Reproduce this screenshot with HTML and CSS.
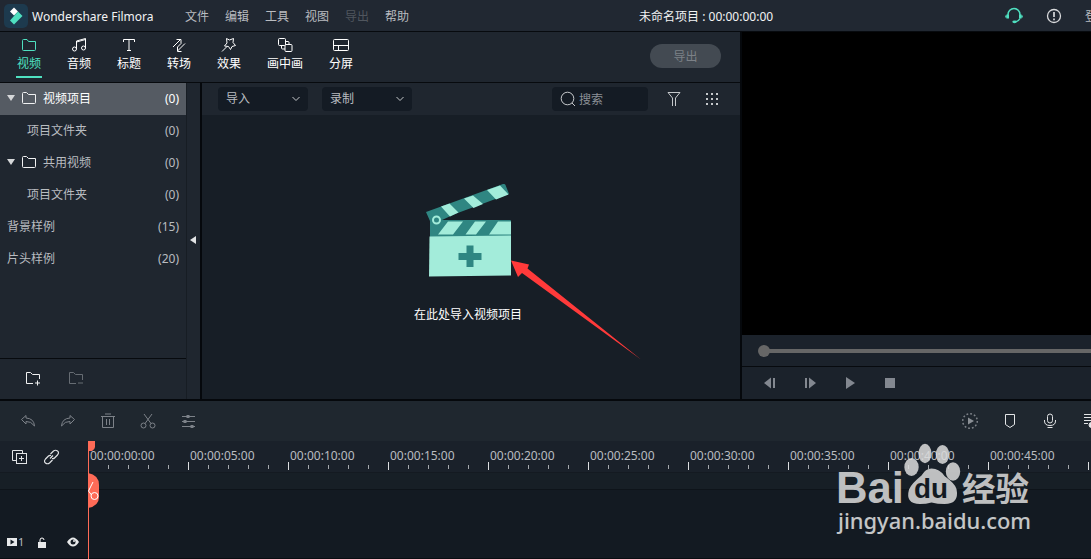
FILE: index.html
```html
<!DOCTYPE html>
<html lang="zh-CN">
  <head>
    <meta charset="UTF-8" />
    <meta name="viewport" content="width=device-width, initial-scale=1.0" />
    <title>Wondershare Filmora</title>
    <link rel="stylesheet" href="styles.css">
  </head>
  <body>
    <header class="titlebar">
      <div class="logo">
        <svg width="24" height="24" viewBox="0 0 24 24">
          <rect width="24" height="24" rx="5" fill="#1d3a4e" />
          <path d="M10 3.500l4 4-4 4-4-4z" fill="#fff" />
          <path d="M14 7.500l4.500 4.500-8.500 8.500-4-4z" fill="#4fe0c0" />
        </svg>
      </div>
      <span class="app-name">Wondershare Filmora</span>
      <nav class="menu">
        <span>文件</span>
        <span>编辑</span>
        <span>工具</span>
        <span>视图</span>
        <span class="disabled">导出</span>
        <span>帮助</span>
      </nav>
      <span class="project-name">未命名项目 : 00:00:00:00</span>
      <div class="account">
        <svg width="18" height="18" viewBox="0 0 18 18" fill="none" stroke="#4fe0c0" stroke-width="1.500">
          <path d="M3 9V7.500a6 6 0 0 1 12 0V9" />
          <path d="M2.700 7.500v4M15.300 7.500v4" stroke-width="2.600" />
          <path d="M1 8.500v2M17 8.500v2M15 11.500q-1.500 3-5 3.300" />
          <ellipse cx="9.500" cy="14.800" rx="2.200" ry="1.400" fill="#4fe0c0" stroke="none" />
        </svg>
        <svg width="16" height="16" viewBox="0 0 16 16" fill="none" stroke="#d9dadc" stroke-width="1.300">
          <circle cx="8" cy="8" r="6.500" />
          <path d="M8 4v5M8 10.500v1.800" stroke-width="1.700" />
        </svg>
        <span>登录</span>
      </div>
    </header>

    <main class="workspace">
      <section class="library">
        <div class="tabs">
          <div class="tab active">
            <svg width="18" height="16" viewBox="0 0 18 16"><path d="M2.500 3.500q0-1 1-1h3.500l1.500 2h7v8q0 1-1 1h-11q-1 0-1-1z" /></svg>
            <span>视频</span>
          </div>
          <div class="tab">
            <svg width="18" height="16" viewBox="0 0 18 16"><path d="M6.500 12V4l9-2.500V11M6.500 5l9-2.500" /><circle cx="4.500" cy="12" r="2" /><circle cx="13.500" cy="11" r="2" /></svg>
            <span>音频</span>
          </div>
          <div class="tab">
            <svg width="18" height="16" viewBox="0 0 18 16"><path d="M3.500 5V2.500h11V5M9 2.500v11M7 13.500h4" /></svg>
            <span>标题</span>
          </div>
          <div class="tab">
            <svg width="18" height="16" viewBox="0 0 18 16"><path d="M3 10l7.500-7.500M6.500 2.500h4.500v4L7.500 10v4.500h4M7.500 14l7.500-7.500" /></svg>
            <span>转场</span>
          </div>
          <div class="tab">
            <svg width="18" height="16" viewBox="0 0 18 16"><path d="M6.500 1.500l3 1.500 4-1.500-.500 4L15.500 8.500l-3.500 1-1.500 3-2-3-4-.500 2.500-3zM7 9.500l-5 5" /></svg>
            <span>效果</span>
          </div>
          <div class="tab">
            <svg width="18" height="16" viewBox="0 0 18 16"><rect x="2.500" y="1.500" width="7" height="7" rx="1" /><path d="M9.500 4.500H12q1 0 1 1V7M5.500 8.500V11q0 1 1 1H9" /><rect x="9" y="7.500" width="7" height="7" rx="1" /></svg>
            <span>画中画</span>
          </div>
          <div class="tab">
            <svg width="18" height="16" viewBox="0 0 18 16"><rect x="1.500" y="2.500" width="15" height="11" rx="1" /><path d="M1.500 8.500h15M6.500 8.500v5" /></svg>
            <span>分屏</span>
          </div>
          <button class="export">导出</button>
        </div>

        <div class="library-body">
          <aside class="sidebar">
            <ul class="tree">
              <li class="parent selected"><i class="caret"></i><svg width="16" height="14" viewBox="0 0 16 14"><path d="M1.500 2.500q0-1 1-1h3l2 2h7v8q0 1-1 1h-11q-1 0-1-1z" /></svg><span>视频项目</span><b>(0)</b></li>
              <li class="child"><span>项目文件夹</span><b>(0)</b></li>
              <li class="parent"><i class="caret"></i><svg width="16" height="14" viewBox="0 0 16 14"><path d="M1.500 2.500q0-1 1-1h3l2 2h7v8q0 1-1 1h-11q-1 0-1-1z" /></svg><span>共用视频</span><b>(0)</b></li>
              <li class="child"><span>项目文件夹</span><b>(0)</b></li>
              <li><span>背景样例</span><b>(15)</b></li>
              <li><span>片头样例</span><b>(20)</b></li>
            </ul>
            <div class="folder-actions">
              <svg width="18" height="16" viewBox="0 0 18 16"><path d="M9 13.500H2.500v-11h4l2 2h7V9M13.500 10.500v5M11 13h5" /></svg>
              <svg class="dim" width="18" height="16" viewBox="0 0 18 16"><path d="M9 13.500H2.500v-11h4l2 2h7V10M11 13h5" /></svg>
            </div>
          </aside>
          <div class="collapse"><i></i></div>

          <div class="media">
            <div class="media-bar">
              <div class="select"><span>导入</span><svg width="10" height="6" viewBox="0 0 10 6"><path d="M1.500 1l3.500 3.500L8.500 1" /></svg></div>
              <div class="select"><span>录制</span><svg width="10" height="6" viewBox="0 0 10 6"><path d="M1.500 1l3.500 3.500L8.500 1" /></svg></div>
              <div class="search">
                <svg width="16" height="16" viewBox="0 0 16 16"><circle cx="7.500" cy="7.500" r="6.300" /><path d="M12 12l3 3" /></svg>
                <span>搜索</span>
              </div>
              <svg class="filter" width="14" height="16" viewBox="0 0 14 16"><path d="M1 1.500h12L8.500 7v8M1 1.500L5.500 7v8" /></svg>
              <svg class="grid" width="14" height="14" viewBox="0 0 14 14"><path d="M1 2h12M1 7h12M1 12h12" stroke-dasharray="2 3" stroke-width="2" /></svg>
            </div>
            <div class="drop-area">
              <svg width="90" height="98" viewBox="0 0 90 98">
                <path d="M1 29L78 1q2-.500 2.500 1l3.500 9L30 31l-13 6H85q1 0 1 1v16H5V38z" fill="#2f8682" />
                <path d="M16 23.500l8.500-3 9 9-8.500 4zM39 15.500l9-3 10 8.500-9.500 4zM62 7l13-4.500 8.500 9-12.500 5zM23 38.500h15L28 51.500H13zM50 38.500h11l-10 13H40.500zM73 38.500h13v13H64z" fill="#a3ecda" />
                <path d="M4.500 53.500l81.500-1v40L4 93.500z" fill="#a3ecda" />
                <circle cx="11.500" cy="37" r="3.500" fill="#2f8682" stroke="#a3ecda" stroke-width="2" />
                <path d="M41.500 62.500h7v7.500h8v7h-8V84h-7v-7h-8v-7h8z" fill="#2f8682" />
              </svg>
              <p>在此处导入视频项目</p>
              <svg class="arrow" width="134" height="104" viewBox="0 0 134 104">
                <path d="M1 4.500l18 4-1.500 4L131 103.500 12 17l-4 4z" fill="#ff3a3a" />
              </svg>
            </div>
          </div>
        </div>
      </section>

      <section class="preview">
        <div class="screen"></div>
        <div class="seek"><i class="knob"></i><i class="track"></i></div>
        <div class="controls">
          <svg width="12" height="12" viewBox="0 0 12 12"><path d="M0 6l7-5.500v11zM9 1h2v10H9z" /></svg>
          <svg width="12" height="12" viewBox="0 0 12 12"><path d="M1 1h2v10H1zM5 .5L12 6l-7 5.500z" /></svg>
          <svg width="12" height="12" viewBox="0 0 12 12"><path d="M2 0l9 6-9 6z" /></svg>
          <svg width="12" height="12" viewBox="0 0 12 12"><path d="M1 1h10v10H1z" /></svg>
        </div>
      </section>
    </main>

    <section class="timeline">
      <div class="edit-bar">
        <div class="edit-tools">
          <svg width="16" height="16" viewBox="0 0 16 16"><path d="M6 2.500L1.500 6.500 6 11V8.500q5-.500 8.500 4.500Q14 5.500 6 5z" /></svg>
          <svg width="16" height="16" viewBox="0 0 16 16"><path d="M10 2.500l4.500 4L10 11V8.500Q5 8 1.500 13 2 5.500 10 5z" /></svg>
          <svg width="16" height="16" viewBox="0 0 16 16"><path d="M1 3.500h14M5 1h6M2.500 3.500v11h11v-11M6.500 6v6M9.500 6v6" /></svg>
          <svg width="16" height="16" viewBox="0 0 16 16"><circle cx="3.500" cy="12.500" r="2.500" /><circle cx="12.500" cy="12.500" r="2.500" /><path d="M4 1l7 9.500M12 1L5 10.500" /></svg>
          <svg width="16" height="16" viewBox="0 0 16 16"><path d="M2 3.500h13M2 8.500h13M2 13.500h13" /><path d="M6.500 3.500h3M3.500 8.500h3M10.500 13.500h3" stroke-width="3" /></svg>
        </div>
        <div class="record-tools">
          <svg class="dim" width="18" height="18" viewBox="0 0 18 18"><circle cx="9" cy="9" r="7.300" stroke-width="1.500" stroke-dasharray="1.800 2.020" /><path d="M7 5.500l6 3.500-6 3.500z" fill="#8b9096" stroke="none" /></svg>
          <svg width="18" height="18" viewBox="0 0 18 18"><path d="M4.500 2.500h9v10L9 15.500l-4.500-3z" /></svg>
          <svg width="18" height="18" viewBox="0 0 18 18"><rect x="6.500" y="2" width="5" height="9" rx="2.500" /><path d="M3.500 8v1q0 4.500 5.500 4.500t5.500-4.500V8M6.500 15.500h5" /></svg>
          <svg width="18" height="18" viewBox="0 0 18 18"><path d="M3 2.500h14M3 5.500h10M3 8.500h7M3 11.500h4" /><circle cx="10.500" cy="13" r="2.500" fill="#e2e4e6" /></svg>
        </div>
      </div>
      <div class="ruler-row">
        <div class="track-tools">
          <svg width="16" height="16" viewBox="0 0 16 16"><path d="M4 11.500H.500V1.500h10v3" /><rect x="4.500" y="4.500" width="10" height="10" /><path d="M9.500 7v5M7 9.500h5" /></svg>
          <svg width="16" height="16" viewBox="0 0 16 16"><path d="M6.500 5L9.500 2q2-1.500 4 0t0 4l-3 3q-1 1-2.500.500M8.500 11L5.500 14q-2 1.500-4 0t0-4l3-3q1-1 2.500-.500M6 9.500L9 6.500" stroke-width="1.200" /></svg>
        </div>
        <div class="ruler">
          <span>00:00:00:00</span>
          <span>00:00:05:00</span>
          <span>00:00:10:00</span>
          <span>00:00:15:00</span>
          <span>00:00:20:00</span>
          <span>00:00:25:00</span>
          <span>00:00:30:00</span>
          <span>00:00:35:00</span>
          <span>00:00:40:00</span>
          <span>00:00:45:00</span>
          <span></span>
        </div>
      </div>
      <div class="marker-row"></div>
      <div class="track-row">
        <div class="track-head">
          <svg width="10" height="8" viewBox="0 0 10 8"><path fill-rule="evenodd" d="M0 0h10v8H0zM3.500 1.500v5l4-2.500z" /></svg>
          <span>1</span>
          <svg width="10" height="11" viewBox="0 0 10 11"><path d="M1 5h8v6H1z" /><path d="M3 5V3q0-2 2-2t2 2" fill="none" stroke="#fff" /></svg>
          <svg width="12" height="10" viewBox="0 0 12 10"><path d="M0 5q6-9 12 0-6 9-12 0z" /><circle cx="6" cy="5" r="2.500" fill="#131a22" /><circle cx="7" cy="4" r="1" /></svg>
        </div>
      </div>
      <svg class="playhead" width="14" height="118" viewBox="0 0 14 118">
        <path d="M0 0h7v6q0 2-3 4H0zM0 32q11 2 11 12v12q0 9-11 11z" fill="#ff6b57" />
        <path d="M.500 0v118" stroke="#ff6b57" />
        <path d="M5 41L.500 50l3 4" fill="none" stroke="#fff" />
        <circle cx="6.500" cy="55" r="3.500" fill="none" stroke="#fff" />
      </svg>
      <svg class="watermark" width="206" height="100" viewBox="0 0 206 100">
        <g fill="#dcdcdc">
          <ellipse cx="81.500" cy="26" rx="7.200" ry="9" />
          <ellipse cx="95" cy="12.500" rx="6.500" ry="9.700" />
          <ellipse cx="112.500" cy="13.500" rx="6.700" ry="9.500" />
          <ellipse cx="123" cy="30.500" rx="7.200" ry="9.300" />
          <path d="M101.500 27.500q-6 0-10 7-10 8-12.500 14-4 14.500 11 14.500 6 0 11.500-1.500 6 1.500 13 1.500 15 0 12-15-1-5-12-13-5-7.500-13-7.500z" />
        </g>
        <g class="watermark-name">
          <text x="6" y="62" textLength="68" lengthAdjust="spacingAndGlyphs">Bai</text>
          <text class="paw-text" x="84" y="57" textLength="34" lengthAdjust="spacingAndGlyphs">du</text>
          <text class="cjk" x="132" y="60" textLength="67" lengthAdjust="spacingAndGlyphs">经验</text>
        </g>
        <text class="url" x="8" y="88" textLength="193" lengthAdjust="spacingAndGlyphs">jingyan.baidu.com</text>
      </svg>
    </section>
  </body>
</html>
```
FILE: styles.css
```css
* {
  box-sizing: border-box;
}
body {
  margin: 0;
  width: 100vw;
  height: 100vh;
  overflow: hidden;
  display: flex;
  flex-direction: column;
  background: #05080c;
  color: #b9bcc0;
  font: 12px/16px "Noto Sans", "Noto Sans CJK SC", sans-serif;
}
svg {
  display: block;
  flex: none;
}
span {
  white-space: nowrap;
}

.titlebar {
  flex: none;
  display: flex;
  align-items: center;
  height: 32px;
  padding-left: 4px;
  background: #212832;
  border-bottom: 1px solid #070a0e;
  overflow: hidden;
}
.titlebar > span,
.menu,
.account span {
  padding-top: 2px;
}
.app-name {
  flex: none;
  width: 153px;
  margin-left: 4px;
  color: #f2f3f4;
}
.menu {
  flex: none;
  display: flex;
  gap: 16px;
}
.menu .disabled {
  color: #50565e;
}
.project-name {
  flex: none;
  margin-left: 230px;
  width: 366px;
  color: #f2f3f4;
}
.account {
  flex: none;
  display: flex;
  align-items: center;
  gap: 23px;
}

.workspace {
  flex: none;
  display: flex;
  height: 369px;
  border-bottom: 2px solid #05080c;
}
.library {
  flex: none;
  width: 742px;
  border-right: 2px solid #05080c;
  display: flex;
  flex-direction: column;
}
.tabs {
  display: flex;
  gap: 24px;
  height: 51px;
  padding: 0 19px 0 16px;
  background: #1f262f;
  border-bottom: 1px solid #070a0e;
}
.tab {
  display: flex;
  flex-direction: column;
  align-items: center;
  height: 46px;
  padding: 5px 1px 0;
  color: #fff;
}
.tab svg {
  margin-bottom: 3px;
  fill: none;
  stroke: currentColor;
}
.tab.active {
  color: #4fe0c0;
  border-bottom: 2px solid #4fe0c0;
}
.export {
  width: 71px;
  height: 24px;
  margin: 12px 0 0 auto;
  padding-top: 3px;
  border: 0;
  border-radius: 12px;
  background: #434a52;
  color: #7c8187;
  font: inherit;
}

.library-body {
  flex: 1;
  display: flex;
  background: #1f262f;
}
.sidebar {
  width: 187px;
  display: flex;
  flex-direction: column;
  border-right: 1px solid #171d24;
}
.tree {
  flex: 1;
  margin: 0;
  padding: 0;
  list-style: none;
}
.tree li {
  display: flex;
  align-items: center;
  height: 32px;
  padding: 0 7px;
}
.tree li.child {
  padding-left: 27px;
}
.tree li.selected {
  background: #555b63;
  color: #fff;
}
.tree b {
  margin-left: auto;
  font-weight: normal;
}
.tree svg {
  margin: 0 6px 2px 6px;
  fill: none;
  stroke: #f0f1f2;
}
.caret {
  margin-bottom: 2px;
  border: 4px solid transparent;
  border-top: 6px solid #d5d7d9;
  border-bottom: 0;
}
.folder-actions {
  display: flex;
  gap: 25px;
  height: 41px;
  padding: 11px 24px;
  border-top: 1px solid #070a0e;
}
.folder-actions svg {
  fill: none;
  stroke: #f0f1f2;
}
.folder-actions .dim {
  stroke: #666c73;
}
.collapse {
  width: 15px;
  display: flex;
  align-items: center;
  padding-bottom: 2px;
  border-right: 2px solid #05080c;
}
.collapse i {
  margin-left: 3px;
  border: 4px solid transparent;
  border-right: 6px solid #e2e4e6;
  border-left: 0;
}
.media {
  flex: 1;
  display: flex;
  flex-direction: column;
  background: #171e26;
}
.media-bar {
  display: flex;
  align-items: center;
  height: 32px;
  padding: 0 21px 0 16px;
  background: #1f262f;
}
.media-bar svg {
  fill: none;
  stroke: #c5c8cb;
}
.select,
.search {
  display: flex;
  align-items: center;
  height: 24px;
  border-radius: 4px;
  background: #141b24;
}
.select {
  justify-content: space-between;
  width: 90px;
  margin-right: 14px;
  padding: 0 7px 0 8px;
}
.search {
  width: 96px;
  margin-left: auto;
  padding-left: 8px;
  gap: 3px;
  color: #8b9096;
}
.search span {
  padding-top: 2px;
}
.filter {
  margin: 0 24px 0 19px;
}
.drop-area {
  position: relative;
  flex: 1;
  display: flex;
  flex-direction: column;
  align-items: center;
  padding: 68px 2px 0 0;
}
.drop-area p {
  margin: 26px 4px 0 0;
  color: #fff;
}
/* pointer drawn over the drop area */
.arrow {
  position: absolute;
  left: 308px;
  top: 141px;
}

.preview {
  flex: 1;
  display: flex;
  flex-direction: column;
  background: #1b222b;
}
.screen {
  height: 303px;
  background: #000;
}
.seek {
  display: flex;
  align-items: center;
  height: 32px;
  padding-left: 16px;
  border-bottom: 1px solid #070a0e;
}
.knob {
  width: 12px;
  height: 12px;
  border-radius: 50%;
  background: #666;
}
.track {
  flex: 1;
  height: 4px;
  margin-left: -1px;
  background: #666;
}
.controls {
  flex: 1;
  display: flex;
  align-items: center;
  gap: 28px;
  padding-left: 22px;
}
.controls svg {
  fill: #838890;
}

.timeline {
  position: relative;
  flex: 1;
  display: flex;
  flex-direction: column;
  overflow: hidden;
  background: #131a22;
}
.edit-bar {
  flex: none;
  display: flex;
  justify-content: space-between;
  align-items: center;
  height: 40px;
  background: #1f272f;
}
.edit-bar svg,
.track-tools svg {
  fill: none;
  stroke: #e2e4e6;
}
.edit-tools {
  display: flex;
  gap: 24px;
  padding-left: 20px;
}
.edit-bar .edit-tools svg,
.edit-bar .dim {
  stroke: #7d8289;
}
.record-tools {
  display: flex;
  gap: 22px;
  margin-right: -8px;
}
.ruler-row {
  flex: none;
  display: flex;
  height: 32px;
  background: #1a212a;
  border-bottom: 1px solid #141a21;
}
.track-tools {
  flex: none;
  display: flex;
  align-items: center;
  gap: 16px;
  width: 88px;
  padding-left: 12px;
}
.ruler {
  flex: none;
  display: flex;
  height: 29px;
  background:
    repeating-linear-gradient(90deg, #dcdee0 0 1px, transparent 1px 100px) 0 21px / 100% 8px no-repeat,
    repeating-linear-gradient(90deg, #a5a9ad 0 1px, transparent 1px 20px) 0 24px / 100% 4px no-repeat;
}
.ruler span {
  width: 100px;
  padding: 7px 0 0 2px;
}
.marker-row {
  flex: none;
  height: 17px;
  background: #171f26;
  border-bottom: 1px solid #0e141a;
}
.track-row {
  flex: 1;
  border-bottom: 1px solid #090d12;
}
.track-head {
  display: flex;
  align-items: center;
  height: 16px;
  margin-top: 44px;
  padding-left: 7px;
}
.track-head svg {
  fill: #e8e9ea;
}
.track-head span {
  width: 20px;
  padding-left: 1px;
  font-size: 11px;
}
.track-head svg:last-child {
  margin-left: 20px;
}
/* playhead and watermark lie over the tracks */
.playhead {
  position: absolute;
  left: 88px;
  top: 40px;
}
.watermark {
  position: absolute;
  left: 830px;
  top: 40px;
  opacity: 0.85;
}
.watermark-name text {
  font: bold 44px "Liberation Sans", sans-serif;
  fill: #dcdcdc;
}
.watermark-name .paw-text {
  font-size: 28px;
  fill: #131a22;
}
.watermark-name .cjk {
  font: bold 33px "Noto Sans CJK SC", sans-serif;
}
.url {
  font: 500 22px "Noto Sans", sans-serif;
  fill: #e4e4e4;
}
```
